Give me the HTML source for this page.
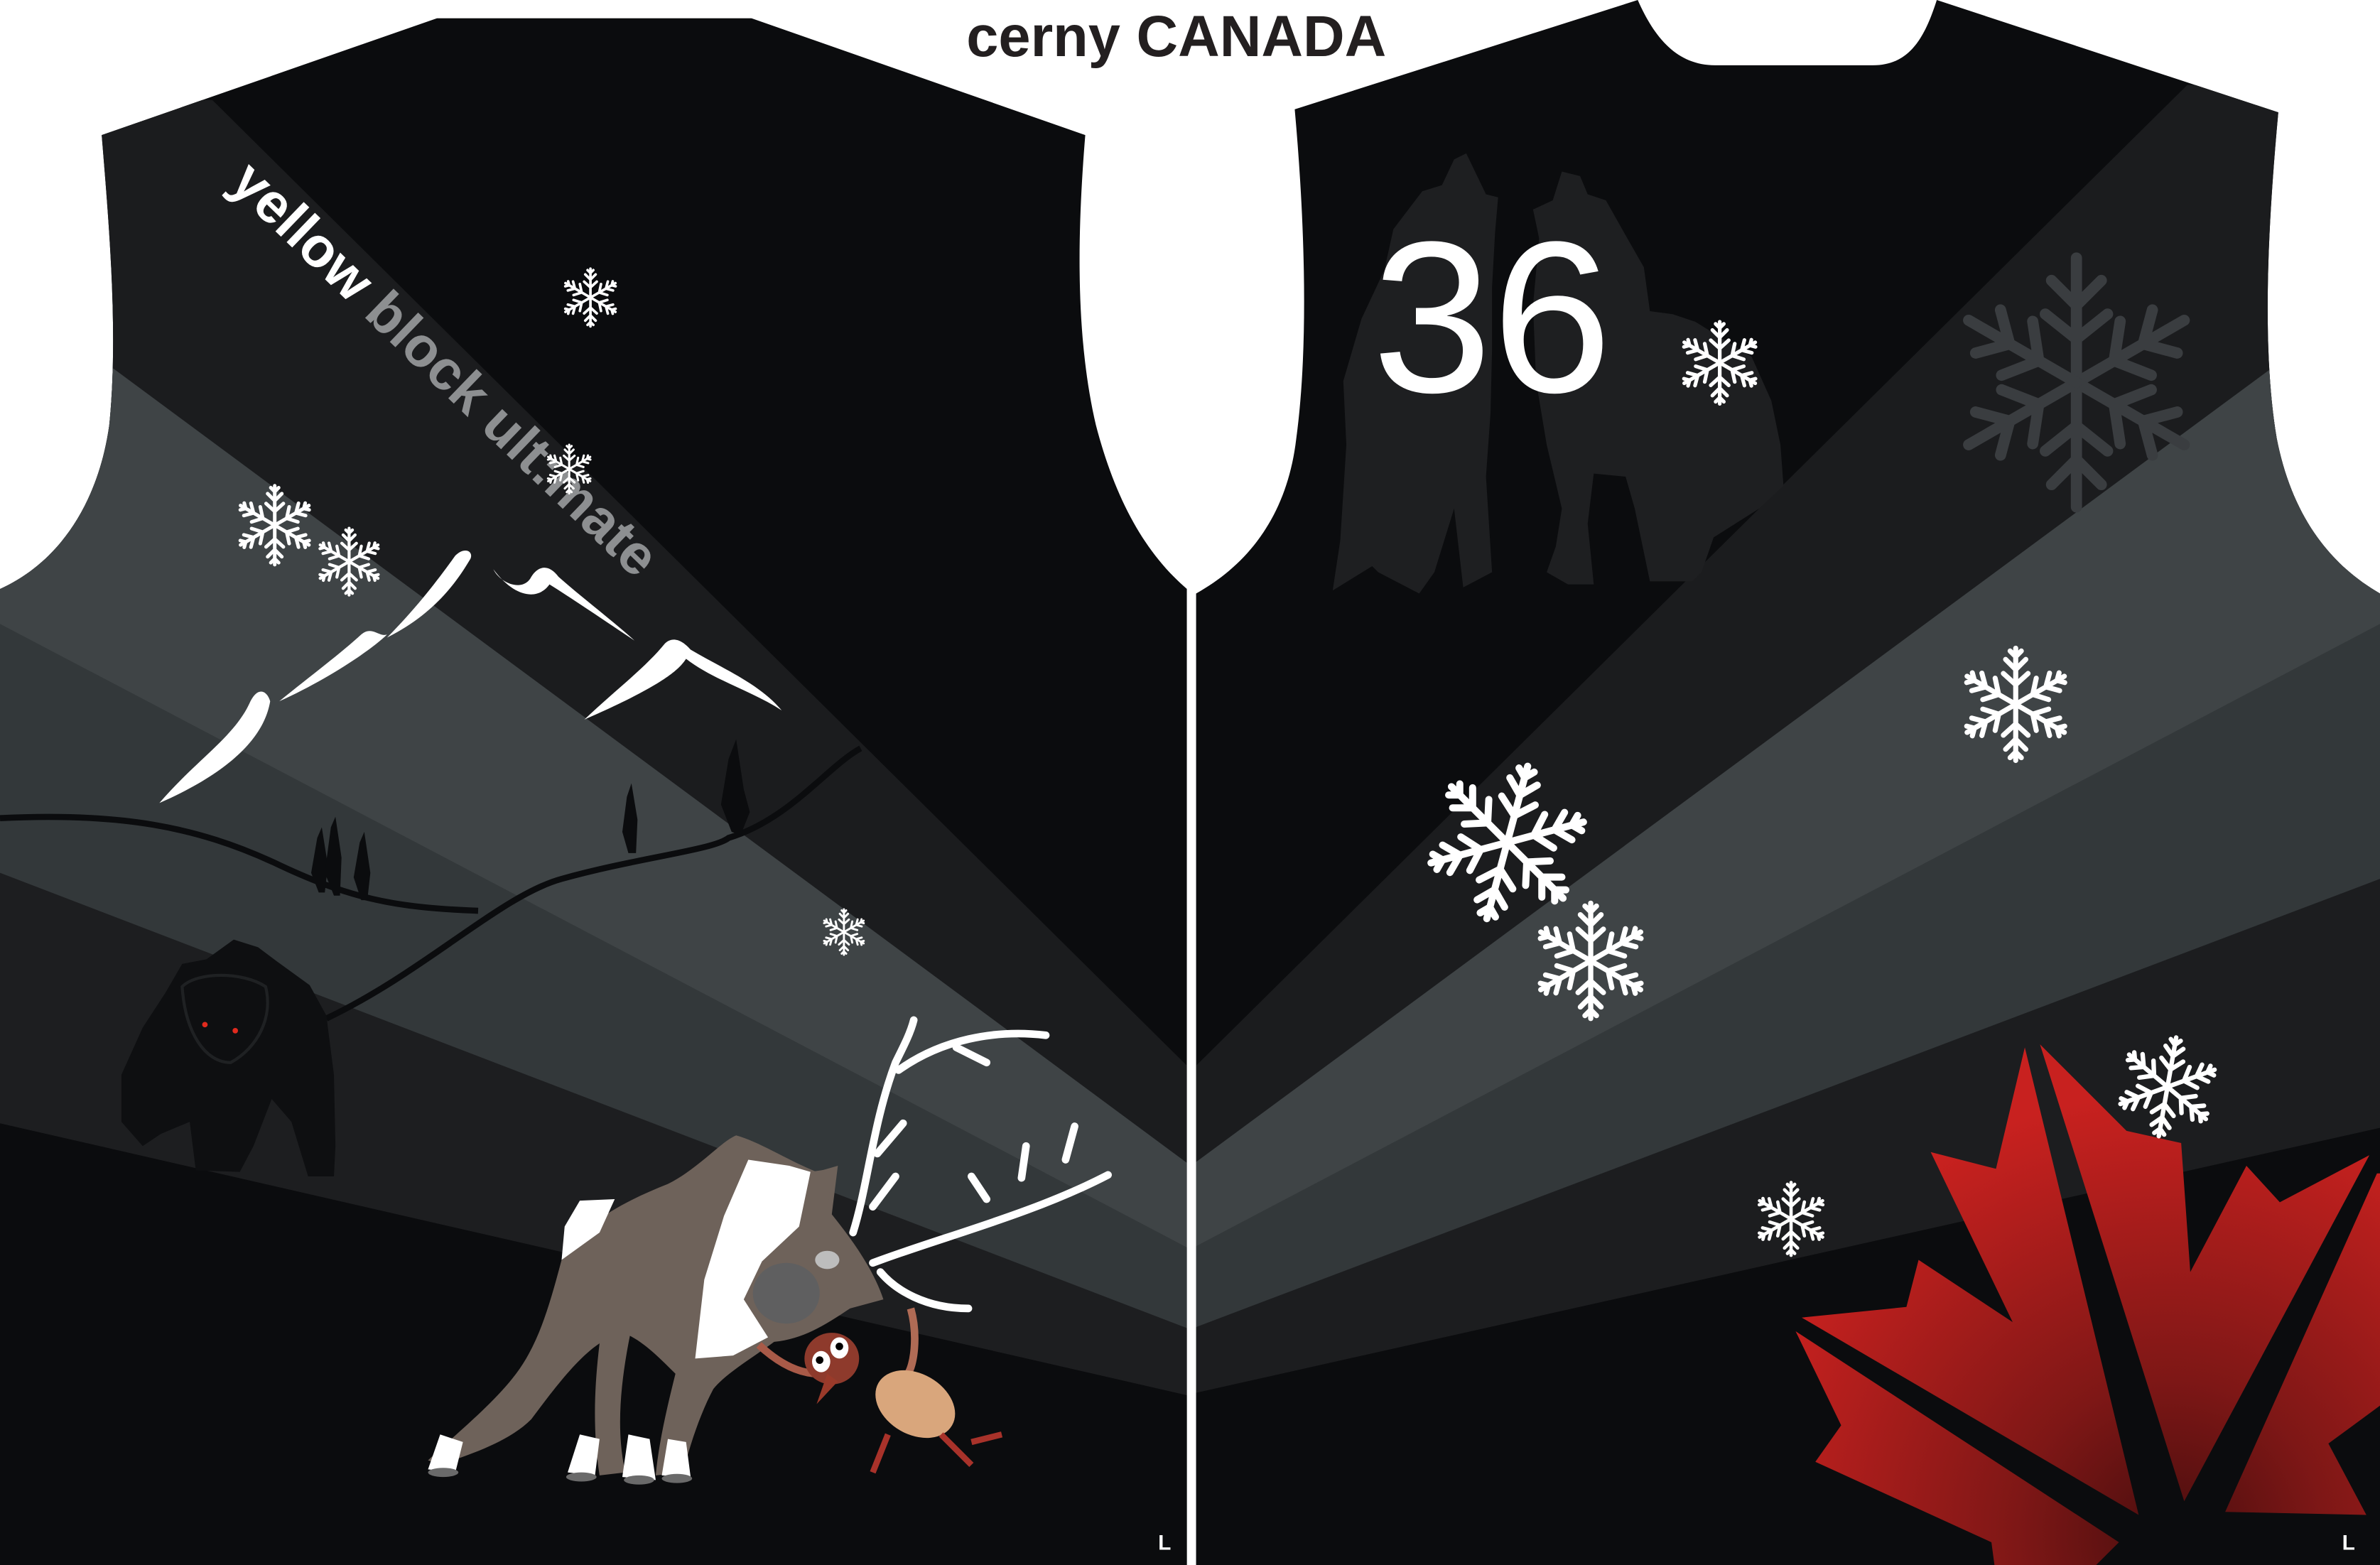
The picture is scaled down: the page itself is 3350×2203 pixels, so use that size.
<!DOCTYPE html>
<html><head><meta charset="utf-8"><style>
html,body{margin:0;padding:0;background:#fff;}
svg{display:block;}
</style></head><body>
<svg width="3350" height="2203" viewBox="0 0 1568 1031" preserveAspectRatio="none" xmlns="http://www.w3.org/2000/svg">
<defs>
<g id="sf">
  <g id="arm" fill="none" stroke="#fff" stroke-width="9" stroke-linecap="round">
    <path d="M0 0 L0 -100 M0 -35 L-22 -55 M0 -35 L22 -55 M0 -62 L-18 -80 M0 -62 L18 -80 M0 -85 L-10 -95 M0 -85 L10 -95"/>
  </g>
  <use href="#arm" transform="rotate(60)"/>
  <use href="#arm" transform="rotate(120)"/>
  <use href="#arm" transform="rotate(180)"/>
  <use href="#arm" transform="rotate(240)"/>
  <use href="#arm" transform="rotate(300)"/>
</g>
<g id="sfg">
  <g id="armg" fill="none" stroke="#3a3d40" stroke-width="9" stroke-linecap="round">
    <path d="M0 0 L0 -100 M0 -35 L-25 -55 M0 -35 L25 -55 M0 -62 L-20 -82 M0 -62 L20 -82"/>
  </g>
  <use href="#armg" transform="rotate(60)"/>
  <use href="#armg" transform="rotate(120)"/>
  <use href="#armg" transform="rotate(180)"/>
  <use href="#armg" transform="rotate(240)"/>
  <use href="#armg" transform="rotate(300)"/>
</g>
<clipPath id="cl"><path d="M67 89 L288 12 L495 12 L715 89 C710 150 708 220 722 280 C735 330 755 365 782 388 L782 1031 L0 1031 L0 388 C40 370 65 330 72 280 C78 220 72 150 67 89 Z"/></clipPath>
<clipPath id="cr"><path d="M853 72 L1079 0 C1090 25 1105 43 1130 43 L1234 43 C1258 43 1268 25 1276 0 L1501 74 C1494 150 1490 230 1500 289 C1510 340 1535 372 1568 391 L1568 1031 L788 1031 L788 391 C822 372 848 340 854 289 C862 230 860 150 853 72 Z"/></clipPath>
<radialGradient id="rg" gradientUnits="userSpaceOnUse" cx="1430" cy="1010" r="290">
  <stop offset="0" stop-color="#4a0e0e"/><stop offset="0.35" stop-color="#7e1716"/><stop offset="1" stop-color="#c8211f"/>
</radialGradient>
</defs>
<rect width="1568" height="1031" fill="#fff"/>

<g clip-path="url(#cl)">
  <rect x="0" y="0" width="790" height="1031" fill="#0b0c0e"/>
  <polygon points="140,66 790,710 790,1031 0,1031 0,60" fill="#1b1c1e"/>
  <polygon points="75,243 790,772 790,1031 0,1031 0,210" fill="#3f4446"/>
  <polygon points="0,411 790,826 790,1031 0,1031" fill="#33383a"/>
  <polygon points="0,575 790,878 790,1031 0,1031" fill="#1d1e20"/>
  <polygon points="0,740 790,921 790,1031 0,1031" fill="#0b0c0e"/>
  <g fill="#fff">
    <path d="M105 529 C130 500 155 485 165 462 C170 452 176 455 178 462 C175 480 160 505 105 529 Z"/>
    <path d="M184 462 C205 445 225 430 238 418 C245 412 250 420 255 418 C245 428 215 448 184 462 Z"/>
    <path d="M255 420 C275 400 290 380 300 366 C306 360 312 363 310 368 C300 385 285 405 255 420 Z"/>
    <path d="M325 375 C330 385 345 390 350 380 C355 372 362 372 368 380 C385 395 405 410 418 422 C400 410 378 395 362 385 C355 395 340 395 325 375 Z"/>
    <path d="M385 474 C405 455 425 440 438 424 C442 420 448 420 455 428 C475 440 500 450 515 468 C495 455 470 448 452 434 C448 440 440 450 385 474 Z"/>
  </g>
  <path d="M0 539 C80 535 130 545 180 568 C230 592 260 598 315 600" stroke="#0b0c0e" stroke-width="4" fill="none"/>
  <path d="M215 671 C280 640 330 590 370 579 C420 565 470 560 480 552 C520 540 545 505 567 493" stroke="#0b0c0e" stroke-width="4" fill="none"/>
  <g fill="#0b0c0e">
    <path d="M210 588 L205 575 L209 552 L212 545 L216 570 L214 588 Z"/>
    <path d="M220 590 L214 575 L218 545 L221 538 L225 565 L224 590 Z"/>
    <path d="M238 593 L233 578 L237 555 L240 548 L244 575 L242 593 Z"/>
    <path d="M414 562 L410 548 L413 525 L416 516 L420 540 L419 562 Z"/>
    <path d="M482 548 L475 530 L480 500 L485 487 L490 520 L494 535 L488 550 Z"/>
  </g>
  <path d="M136 632 L154 619 L170 624 L182 633 L204 649 L215 669 L220 708 L221 755 L220 775 L203 775 L192 739 L179 724 L167 755 L158 772 L129 771 L125 739 L106 747 L94 755 L80 739 L80 708 L94 677 L109 654 L120 635 Z" fill="#0e0f11"/>
  <path d="M120 650 C130 640 160 640 175 650 C180 670 170 690 152 700 C135 700 122 680 120 650 Z" fill="none" stroke="#1f2123" stroke-width="2"/>
  <circle cx="135" cy="675" r="1.8" fill="#e02a1e"/><circle cx="155" cy="679" r="1.8" fill="#e02a1e"/>
  <!-- antlers -->
  <g fill="none" stroke="#fff" stroke-width="5" stroke-linecap="round">
    <path d="M562 812 C572 780 575 740 590 700 C596 688 600 680 602 672"/>
    <path d="M592 705 C620 685 655 678 689 682"/>
    <path d="M630 690 L650 700"/>
    <path d="M578 760 L595 740"/>
    <path d="M575 795 L590 775"/>
    <path d="M575 832 C620 815 680 800 730 774"/>
    <path d="M702 764 L708 742"/><path d="M673 776 L676 755"/><path d="M650 790 L640 775"/>
    <path d="M580 838 C590 850 610 862 638 862"/>
  </g>
  <!-- reindeer body -->
  <path d="M370 830 C385 805 410 792 440 780 C460 770 475 752 485 748 C500 752 520 765 538 772 L552 768 L548 800 C560 815 575 835 582 856 L560 862 C545 872 530 882 510 884 C495 895 478 905 470 915 C462 930 455 950 450 970 L432 972 C434 950 440 925 445 905 C435 895 425 885 415 880 C410 905 405 940 412 970 L395 972 C390 940 392 910 395 885 C380 895 365 915 350 935 C335 950 310 958 290 965 L282 962 C300 945 325 925 340 905 C355 885 362 860 370 830 Z" fill="#6e625a"/>
  <polygon points="370,830 372,808 382,791 405,790 395,812" fill="#fff"/>
  <polygon points="493,764 520,768 534,772 534,801 502,831 490,856 506,881 483,893 458,895 464,843 477,801" fill="#fff"/>
  <path d="M534 772 L548 770 L545 800 C555 815 565 830 575 850 L555 855 C540 848 530 835 525 815 Z" fill="#6e625a"/>
  <ellipse cx="518" cy="852" rx="22" ry="20" fill="#5f5f60"/>
  <ellipse cx="545" cy="830" rx="8" ry="6" fill="#bdbdbd"/>
  <g fill="#fff">
    <path d="M282 968 L290 945 L305 950 L300 970 Z"/>
    <path d="M374 970 L382 945 L395 948 L392 972 Z"/>
    <path d="M410 973 L414 945 L428 948 L432 975 Z"/>
    <path d="M436 972 L440 948 L452 950 L455 973 Z"/>
  </g>
  <g fill="#6a6a6a">
    <ellipse cx="292" cy="970" rx="10" ry="3"/><ellipse cx="383" cy="973" rx="10" ry="3"/>
    <ellipse cx="421" cy="975" rx="10" ry="3"/><ellipse cx="446" cy="974" rx="10" ry="3"/>
  </g>
  <!-- creature -->
  <path d="M600 862 C605 880 602 900 598 905" stroke="#b06b55" stroke-width="5" fill="none"/>
  <path d="M500 886 C515 900 528 905 540 905" stroke="#a85a48" stroke-width="5" fill="none"/>
  <ellipse cx="603" cy="925" rx="28" ry="20" transform="rotate(30 603 925)" fill="#d9a67c"/>
  <ellipse cx="548" cy="895" rx="18" ry="17" fill="#8e3a2c"/>
  <ellipse cx="553" cy="888" rx="6" ry="7" fill="#fff"/><ellipse cx="541" cy="897" rx="6" ry="7" fill="#fff"/>
  <circle cx="553" cy="887" r="2.5" fill="#000"/><circle cx="540" cy="896" r="2.5" fill="#000"/>
  <path d="M545 905 L538 925 L552 910 Z" fill="#9a3a2a"/>
  <path d="M585 945 L575 970 M620 945 L640 965 M640 950 L660 945" stroke="#a8322a" stroke-width="4" fill="none"/>
  <text x="763" y="1021" font-family="Liberation Sans, sans-serif" font-weight="bold" font-size="14" fill="#fff">L</text>
</g>

<text transform="translate(150,122) rotate(44)" font-family="Liberation Sans, sans-serif" font-weight="bold" font-size="37" fill="#fff">yellow <tspan fill="#8d8f91">block ult:mate</tspan></text>

<g clip-path="url(#cr)">
  <rect x="780" y="0" width="800" height="1031" fill="#0b0c0e"/>
  <polygon points="786,704 1441,56 1600,56 1600,1031 780,1031" fill="#1b1c1e"/>
  <polygon points="786,767 1496,243 1600,200 1600,1031 780,1031" fill="#3f4446"/>
  <polygon points="786,822 1568,411 1600,400 1600,1031 780,1031" fill="#33383a"/>
  <polygon points="786,875 1568,579 1600,570 1600,1031 780,1031" fill="#1c1d1f"/>
  <polygon points="786,918 1568,743 1600,740 1600,1031 780,1031" fill="#0b0c0e"/>
  <polygon points="966,101 979,128 987,130 985,153 983,189 983,230 982,272 979,314 983,377 964,387 958,335 945,377 935,391 908,377 904,373 878,389 883,356 887,293 885,251 897,210 912,178 918,151 937,126 950,122 958,105" fill="#1e1f21"/>
  <polygon points="1029,113 1041,116 1046,128 1058,132 1071,155 1083,176 1087,205 1102,207 1117,212 1154,235 1167,264 1173,293 1175,320 1159,335 1129,354 1121,377 1115,383 1087,383 1077,335 1071,314 1050,312 1046,345 1050,385 1033,385 1019,377 1025,360 1029,335 1019,293 1012,251 1010,201 1014,157 1010,138 1023,132" fill="#1e1f21"/>
  <text x="904" y="258" font-family="Liberation Sans, sans-serif" font-size="142" fill="#fff">36</text>
  <use href="#sfg" transform="translate(1368,252) scale(0.82)"/>
  <polygon points="1183,877 1396,1016 1381,1031 1314,1031 1312,1016 1196,963 1213,939" fill="url(#rg)"/>
  <polygon points="1187,868 1256,861 1264,830 1326,871 1272,759 1315,770 1334,690 1409,998" fill="url(#rg)"/>
  <polygon points="1344,688 1401,745 1437,753 1443,838 1480,768 1502,792 1561,761 1439,989" fill="url(#rg)"/>
  <polygon points="1466,996 1566,773 1568,773 1568,926 1534,951 1559,998" fill="url(#rg)"/>
  <text x="1543" y="1021" font-family="Liberation Sans, sans-serif" font-weight="bold" font-size="14" fill="#fff">L</text>
</g>

<use href="#sf" transform="translate(389,196) scale(0.19)"/>
<use href="#sf" transform="translate(375,309) scale(0.16)"/>
<use href="#sf" transform="translate(181,346) scale(0.26)"/>
<use href="#sf" transform="translate(230,370) scale(0.22)"/>
<use href="#sf" transform="translate(556,614) scale(0.15)"/>
<use href="#sf" transform="translate(1133,239) scale(0.27)"/>
<use href="#sf" transform="translate(1328,464) scale(0.37)"/>
<use href="#sf" transform="translate(993,555) scale(0.52) rotate(15)"/>
<use href="#sf" transform="translate(1048,633) scale(0.38)"/>
<use href="#sf" transform="translate(1428,716) scale(0.33) rotate(10)"/>
<use href="#sf" transform="translate(1180,803) scale(0.24)"/>

<rect x="782" y="388" width="6" height="643" fill="#fff"/>

<text x="775" y="37" text-anchor="middle" font-family="Liberation Sans, sans-serif" font-weight="bold" font-size="38" fill="#231f20">cerny CANADA</text>
</svg>
</body></html>
